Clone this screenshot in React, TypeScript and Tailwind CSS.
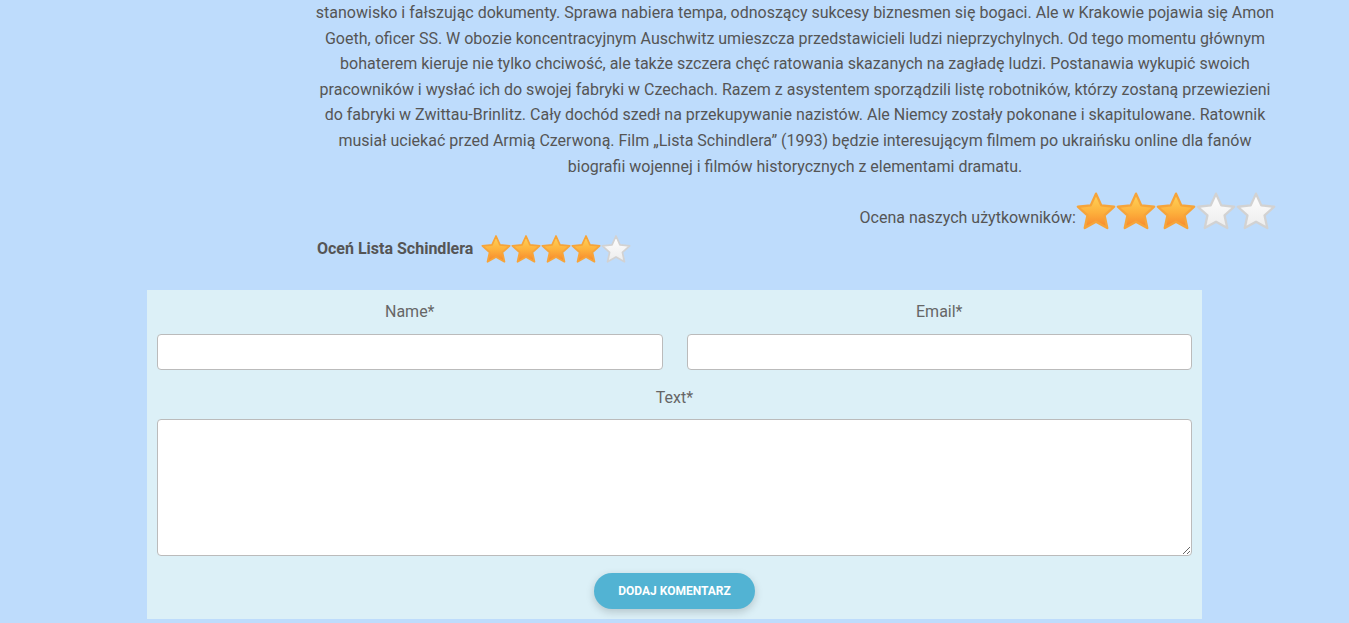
import React from "react";

const paragraph =
  "stanowisko i fałszując dokumenty. Sprawa nabiera tempa, odnoszący sukcesy biznesmen się bogaci. Ale w Krakowie pojawia się Amon Goeth, oficer SS. W obozie koncentracyjnym Auschwitz umieszcza przedstawicieli ludzi nieprzychylnych. Od tego momentu głównym bohaterem kieruje nie tylko chciwość, ale także szczera chęć ratowania skazanych na zagładę ludzi. Postanawia wykupić swoich pracowników i wysłać ich do swojej fabryki w Czechach. Razem z asystentem sporządzili listę robotników, którzy zostaną przewiezieni do fabryki w Zwittau-Brinlitz. Cały dochód szedł na przekupywanie nazistów. Ale Niemcy zostały pokonane i skapitulowane. Ratownik musiał uciekać przed Armią Czerwoną. Film „Lista Schindlera” (1993) będzie interesującym filmem po ukraińsku online dla fanów biografii wojennej i filmów historycznych z elementami dramatu.";

const STAR =
  "M12 1.6L15.17 8.63 22.9 9.45 17.14 14.67 18.76 22.2 12 18.4 5.24 22.2 6.86 14.67 1.1 9.45 8.83 8.63z";

function Star({ on, size }: { on: boolean; size: number }) {
  return (
    <svg width={size} height={size} viewBox="0 0 24 24" className="block shrink-0">
      <path
        d={STAR}
        fill={on ? "url(#starOn)" : "url(#starOff)"}
        stroke={on ? "#f6a43a" : "#d2d2d2"}
        strokeWidth="1.4"
        strokeLinejoin="round"
      />
    </svg>
  );
}

function Stars({ value, size }: { value: number; size: number }) {
  return (
    <div className="flex">
      {[1, 2, 3, 4, 5].map((n) => (
        <Star key={n} on={n <= value} size={size} />
      ))}
    </div>
  );
}

export default function App() {
  return (
    <div
      className="min-h-[623px] bg-[#bedcfc] text-[#555]"
      style={{ fontFamily: "Roboto, 'Liberation Sans', sans-serif" }}
    >
      <svg width="0" height="0" className="absolute">
        <defs>
          <linearGradient id="starOn" x1="0" y1="0" x2="0" y2="1">
            <stop offset="0" stopColor="#ffd65a" />
            <stop offset="0.55" stopColor="#fdb03c" />
            <stop offset="1" stopColor="#f7862c" />
          </linearGradient>
          <linearGradient id="starOff" x1="0" y1="0" x2="0" y2="1">
            <stop offset="0" stopColor="#ffffff" />
            <stop offset="1" stopColor="#ececec" />
          </linearGradient>
        </defs>
      </svg>

      <div className="pl-[312px]">
        <p className="w-[966px] text-center text-[16px] leading-[25.6px]">{paragraph}</p>

        <div className="w-[966px] flex justify-end items-end pr-[2px] mt-[12px]">
          <span className="text-[16px] leading-[20px] mb-[3px]">Ocena naszych użytkowników:</span>
          <Stars value={3} size={40} />
        </div>

        <div className="flex items-center pl-[5px] mt-[3px]">
          <span className="text-[16px] font-bold mr-[8px]">Oceń Lista Schindlera</span>
          <Stars value={4} size={30} />
        </div>
      </div>

      <form className="w-[1055px] mx-auto mt-[26px] bg-[#dcf0f7] px-[10px] pt-[12px] pb-[10px]">
        <div className="grid grid-cols-2 gap-x-6">
          <div>
            <label className="block text-center text-[16px] leading-[20px] text-[#666]">Name*</label>
            <input className="mt-3 block w-full h-[36px] bg-white border border-[#bbb] rounded-[4px]" />
          </div>
          <div>
            <label className="block text-center text-[16px] leading-[20px] text-[#666]">Email*</label>
            <input className="mt-3 block w-full h-[36px] bg-white border border-[#bbb] rounded-[4px]" />
          </div>
        </div>
        <label className="block text-center text-[16px] leading-[20px] text-[#666] mt-[18px]">Text*</label>
        <textarea className="mt-[11px] block w-full h-[137px] bg-white border border-[#bbb] rounded-[4px]" />
        <div className="flex justify-center mt-[17px]">
          <button
            type="button"
            className="h-[36px] w-[161px] rounded-full bg-[#52b3d3] text-white text-[12px] font-bold uppercase shadow-[0_3px_8px_rgba(0,0,0,0.18)]"
          >
            Dodaj komentarz
          </button>
        </div>
      </form>
    </div>
  );
}
